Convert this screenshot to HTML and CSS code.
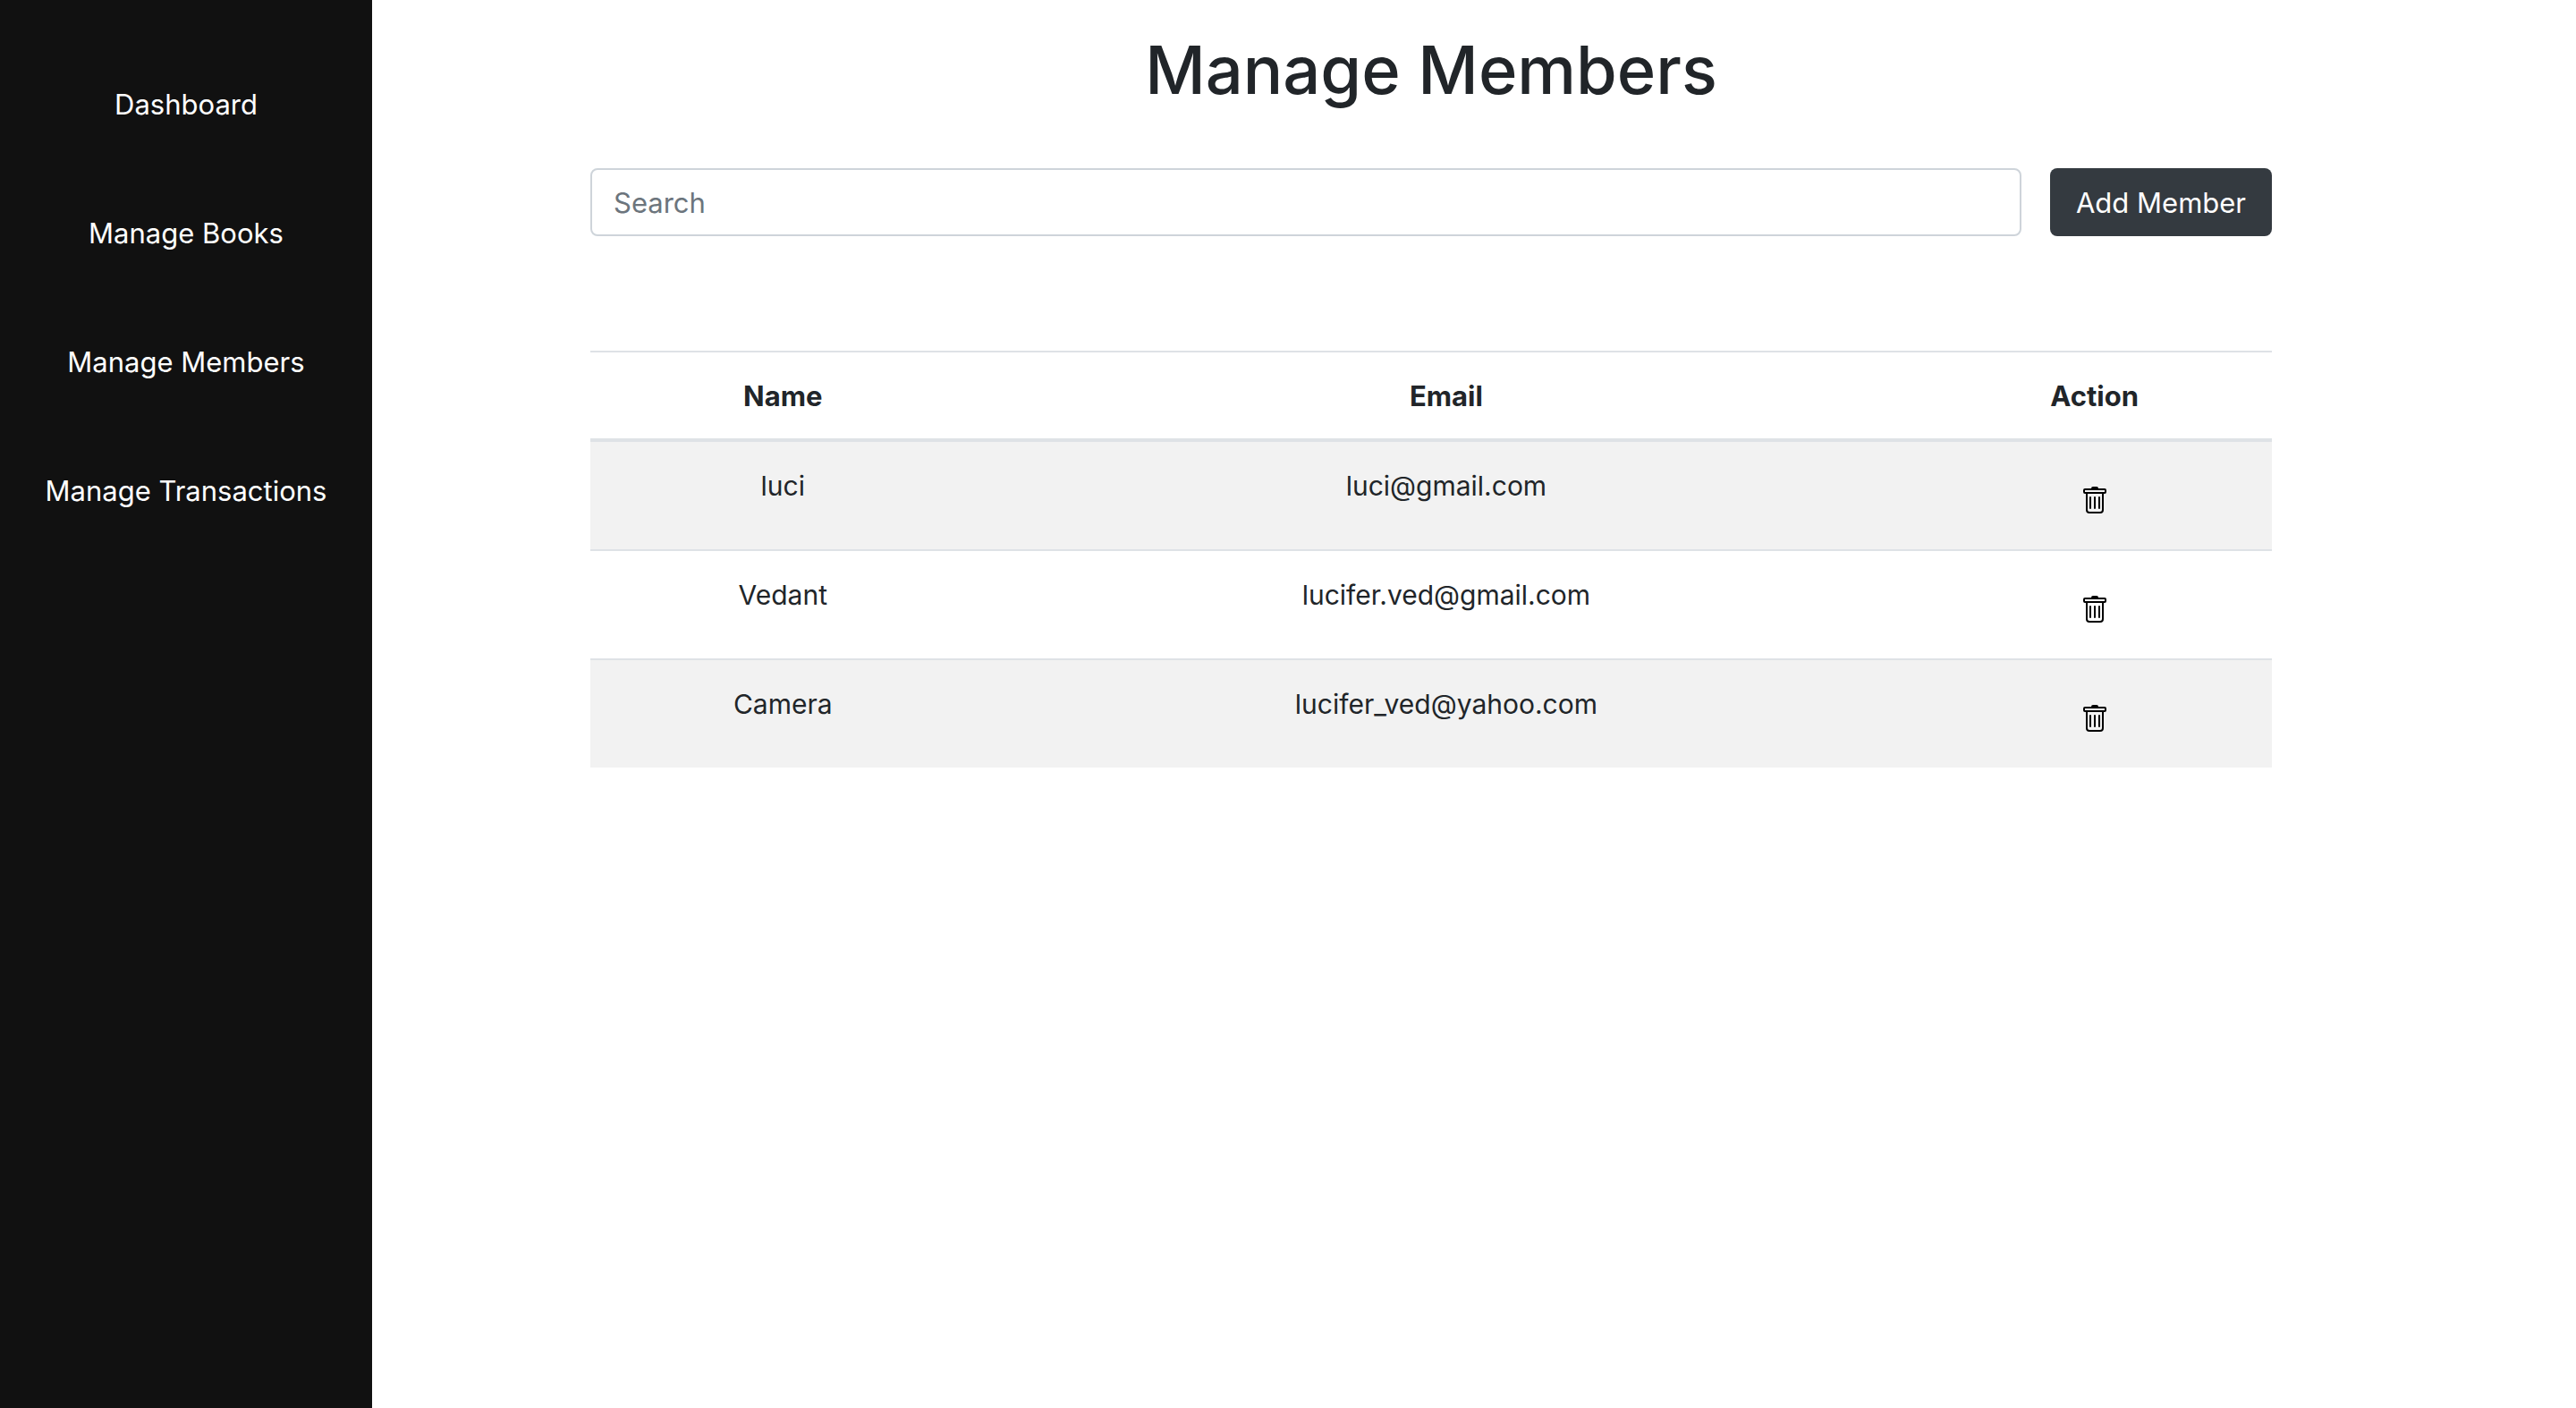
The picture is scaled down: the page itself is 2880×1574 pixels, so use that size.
FILE: index.html
```html
<!DOCTYPE html>
<html lang="en">
<head>
<meta charset="utf-8">
<title>Manage Members</title>
<link rel="stylesheet" href="styles.css">
</head>
<body>
<nav class="sidebar">
  <a href="#dashboard">Dashboard</a>
  <a href="#books">Manage Books</a>
  <a href="#members">Manage Members</a>
  <a href="#transactions">Manage Transactions</a>
</nav>
<main class="main">
  <h1 class="title">Manage Members</h1>
  <form class="toolbar">
    <input class="search" type="text" placeholder="Search" aria-label="Search">
    <button class="add" type="button">Add Member</button>
  </form>
  <table class="members">
    <colgroup><col class="col-name"><col class="col-email"><col class="col-action"></colgroup>
    <thead>
      <tr><th scope="col">Name</th><th scope="col">Email</th><th scope="col">Action</th></tr>
    </thead>
    <tbody>
      <tr><td>luci</td><td>luci@gmail.com</td><td><button class="delete" type="button" aria-label="Delete luci"><svg class="icon" viewBox="0 0 16 16"><use href="#trash"/></svg></button></td></tr>
      <tr><td>Vedant</td><td>lucifer.ved@gmail.com</td><td><button class="delete" type="button" aria-label="Delete Vedant"><svg class="icon" viewBox="0 0 16 16"><use href="#trash"/></svg></button></td></tr>
      <tr><td>Camera</td><td>lucifer_ved@yahoo.com</td><td><button class="delete" type="button" aria-label="Delete Camera"><svg class="icon" viewBox="0 0 16 16"><use href="#trash"/></svg></button></td></tr>
    </tbody>
  </table>
</main>
<svg class="sprite" aria-hidden="true">
  <symbol id="trash" viewBox="0 0 16 16">
    <path d="M5.5 5.5A.5.5 0 0 1 6 6v6a.5.5 0 0 1-1 0V6a.5.5 0 0 1 .5-.5zm2.500 0a.5.5 0 0 1 .5.5v6a.5.5 0 0 1-1 0V6a.5.5 0 0 1 .5-.5zm3 .5a.5.5 0 0 0-1 0v6a.5.5 0 0 0 1 0V6z"/>
    <path fill-rule="evenodd" d="M14.500 3a1 1 0 0 1-1 1H13v9a2 2 0 0 1-2 2H5a2 2 0 0 1-2-2V4h-.5a1 1 0 0 1-1-1V2a1 1 0 0 1 1-1H6a1 1 0 0 1 1-1h2a1 1 0 0 1 1 1h3.500a1 1 0 0 1 1 1v1zM4.118 4 4 4.059V13a1 1 0 0 0 1 1h6a1 1 0 0 0 1-1V4.059L11.882 4H4.118zM2.500 3V2h11v1h-11z"/>
  </symbol>
</svg>
</body>
</html>
```
FILE: styles.css
```css
* { box-sizing: border-box; }
body {
  margin: 0;
  min-height: 100vh;
  display: flex;
  background: #fff;
  color: #212529;
  font: 400 31px/48px Inter, sans-serif;
}
.sidebar {
  flex: 0 0 416px;
  background: #111;
  padding-top: 93px;
  display: flex;
  flex-direction: column;
  gap: 96px;
  text-align: center;
}
.sidebar a { color: #fff; text-decoration: none; }
.main {
  flex: 1;
  padding: 30px 340px 0 244px;
}
.title {
  margin: 0;
  font-size: 74px;
  line-height: 96px;
  font-weight: 500;
  text-align: center;
}
.toolbar { display: flex; gap: 32px; margin: 62px 0 128px; }
.search {
  flex: 1;
  min-width: 0;
  height: 76px;
  padding: 0 24px;
  border: 2px solid #ced4da;
  border-radius: 8px;
  font: inherit;
}
.search::placeholder { color: #6c757d; opacity: 1; }
.add {
  width: 248px;
  height: 76px;
  padding: 2px 0 0;
  border: 0;
  border-radius: 8px;
  background: #343a40;
  color: #fff;
  font: inherit;
}
.members {
  width: 100%;
  table-layout: fixed;
  border-collapse: separate;
  border-spacing: 0;
  text-align: center;
}
.col-name { width: 22.9%; }
.col-email { width: 56%; }
.members th, .members td {
  padding: 25px 24px 23px;
  vertical-align: top;
  border-top: 2px solid #dee2e6;
}
.members th { font-weight: 700; border-bottom: 4px solid #dee2e6; }
.members td { height: 122px; font-size: 30px; }
.members tbody tr:first-child td { height: 120px; border-top: 0; }
.members tbody tr:nth-child(odd) { background: #f2f2f2; }
.delete {
  display: block;
  margin: 25px auto 0;
  padding: 0;
  border: 0;
  background: none;
}
.icon { display: block; width: 32px; height: 32px; }
.sprite { display: none; }
```
